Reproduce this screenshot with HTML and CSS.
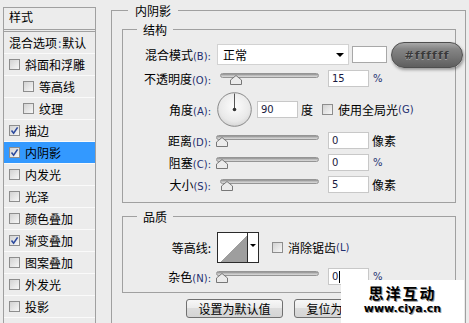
FILE: index.html
```html
<!DOCTYPE html>
<html lang="zh-CN">
<head>
<meta charset="utf-8">
<title>图层样式 - 内阴影</title>
<link rel="stylesheet" href="styles.css">
</head>
<body>
<div class="app">
  <aside class="styles-panel">
    <div class="panel-title">样式</div>
    <ul class="style-list">
      <li class="item blend-opt">混合选项<span class="colon">:</span>默认</li>
      <li class="item"><span class="cb"></span>斜面和浮雕</li>
      <li class="item sub"><span class="cb"></span>等高线</li>
      <li class="item sub"><span class="cb"></span>纹理</li>
      <li class="item"><span class="cb"><svg viewBox="0 0 9 9"><path d="M1.5 4.6 L3.6 7.2 L7.6 1.4" /></svg></span>描边</li>
      <li class="item selected"><span class="cb"><svg viewBox="0 0 9 9"><path d="M1.5 4.6 L3.6 7.2 L7.6 1.4" /></svg></span>内阴影</li>
      <li class="item"><span class="cb"></span>内发光</li>
      <li class="item"><span class="cb"></span>光泽</li>
      <li class="item"><span class="cb"></span>颜色叠加</li>
      <li class="item"><span class="cb"><svg viewBox="0 0 9 9"><path d="M1.5 4.6 L3.6 7.2 L7.6 1.4" /></svg></span>渐变叠加</li>
      <li class="item"><span class="cb"></span>图案叠加</li>
      <li class="item"><span class="cb"></span>外发光</li>
      <li class="item"><span class="cb"></span>投影</li>
      <li class="item"></li>
    </ul>
  </aside>

  <main class="settings">
    <section class="group outer">
      <h2 class="legend">内阴影</h2>

      <section class="group inner struct">
        <h3 class="legend">结构</h3>
        <div class="row r-blend">
          <span class="lbl">混合模式<span class="key">(B):</span></span>
          <div class="select"><span class="select-text">正常</span><span class="caret"></span></div>
          <span class="swatch"></span>
        </div>
        <div class="row r-std">
          <span class="lbl">不透明度<span class="key">(O):</span></span>
          <div class="slider"><span class="track"></span><svg class="thumb" style="left:10px" viewBox="0 0 12 10"><path d="M6 0.5 L11.5 5 V9.5 H0.5 V5 Z"/></svg></div>
          <span class="num">15</span>
          <span class="unit pct">%</span>
        </div>
        <div class="row r-angle">
          <span class="lbl">角度<span class="key">(A):</span></span>
          <svg class="dial" viewBox="0 0 35 35">
            <defs><radialGradient id="dg" cx="50%" cy="40%" r="60%"><stop offset="0" stop-color="#fdfdfd"/><stop offset="0.75" stop-color="#e9e9e9"/><stop offset="1" stop-color="#d6d6d6"/></radialGradient></defs>
            <circle cx="17.5" cy="17.5" r="16.8" fill="url(#dg)" stroke="#8a8a8a" stroke-width="1"/>
            <line x1="17.5" y1="17.5" x2="17.5" y2="1.5" stroke="#555" stroke-width="1"/>
            <circle cx="17.5" cy="17.5" r="1.8" fill="#333"/>
          </svg>
          <span class="num">90</span>
          <span class="deg">度</span>
          <span class="check-line global"><span class="cb"></span>使用全局光<span class="key">(G)</span></span>
        </div>
        <div class="row r-std">
          <span class="lbl">距离<span class="key">(D):</span></span>
          <div class="slider wide"><span class="track"></span><svg class="thumb" style="left:0px" viewBox="0 0 12 10"><path d="M6 0.5 L11.5 5 V9.5 H0.5 V5 Z"/></svg></div>
          <span class="num">0</span>
          <span class="unit">像素</span>
        </div>
        <div class="row r-std">
          <span class="lbl">阻塞<span class="key">(C):</span></span>
          <div class="slider wide"><span class="track"></span><svg class="thumb" style="left:0px" viewBox="0 0 12 10"><path d="M6 0.5 L11.5 5 V9.5 H0.5 V5 Z"/></svg></div>
          <span class="num">0</span>
          <span class="unit pct">%</span>
        </div>
        <div class="row r-std">
          <span class="lbl">大小<span class="key">(S):</span></span>
          <div class="slider"><span class="track"></span><svg class="thumb" style="left:1px" viewBox="0 0 12 10"><path d="M6 0.5 L11.5 5 V9.5 H0.5 V5 Z"/></svg></div>
          <span class="num">5</span>
          <span class="unit">像素</span>
        </div>
      </section>

      <section class="group inner quality">
        <h3 class="legend">品质</h3>
        <div class="row r-contour">
          <span class="lbl">等高线:</span>
          <div class="contour"><span class="contour-preview"></span><span class="contour-arrow"><span class="caret small"></span></span></div>
          <span class="check-line antialias"><span class="cb"></span>消除锯齿<span class="key">(L)</span></span>
        </div>
        <div class="row r-std r-noise">
          <span class="lbl">杂色<span class="key">(N):</span></span>
          <div class="slider wide"><span class="track"></span><svg class="thumb" style="left:0px" viewBox="0 0 12 10"><path d="M6 0.5 L11.5 5 V9.5 H0.5 V5 Z"/></svg></div>
          <span class="num">0<span class="cursor"></span></span>
          <span class="unit pct">%</span>
        </div>
      </section>

      <div class="buttons">
        <button class="btn" type="button">设置为默认值</button>
        <button class="btn" type="button">复位为默认值</button>
      </div>
    </section>
  </main>

  <div class="badge">#ffffff</div>

  <div class="watermark">
    <div class="wm-title">思洋互动</div>
    <div class="wm-url">www.ciya.cn</div>
  </div>
</div>
</body>
</html>
```

FILE: styles.css
```css
* { box-sizing: border-box; }
html, body { margin: 0; padding: 0; }
body {
  background: #ececec;
  font-family: "Noto Sans CJK SC", "Noto Sans", sans-serif;
  font-size: 12px;
  color: #000;
}

.app {
  position: relative;
  width: 469px;
  height: 323px;
  overflow: hidden;
  display: flex;
  align-items: flex-start;
}

/* ---------- left style list ---------- */
.styles-panel {
  flex: none;
  margin: 7px 0 0 3px;
  width: 93px;
  height: 330px;
  border: 1px solid #a0a0a0;
}
.panel-title {
  height: 22px;
  border-bottom: 1px solid #a0a0a0;
  margin-bottom: 1px;
  padding-left: 5px;
  line-height: 17px;
}
.style-list {
  list-style: none;
  margin: 0;
  padding: 0;
  border-top: 1px solid #a0a0a0;
}
.item {
  height: 22px;
  border-bottom: 1px solid #fafafa;
  display: flex;
  align-items: center;
  padding-left: 5px;
  line-height: 21px;
  white-space: nowrap;
}
.item.sub { padding-left: 19px; }
.item.selected { background: #3399ff; }
.blend-opt .colon { color: #2a5db0; margin: 0 1px; }

.cb {
  flex: none;
  width: 11px;
  height: 11px;
  border: 1px solid #8d8d8d;
  background: linear-gradient(135deg, #d2d2d2, #f7f7f7);
  margin-right: 5px;
  display: inline-flex;
  align-items: center;
  justify-content: center;
}
.cb svg { width: 9px; height: 9px; }
.cb svg path { fill: none; stroke: #2d4a9e; stroke-width: 1.6; }

/* ---------- right settings ---------- */
.settings {
  flex: none;
  margin: 10px 0 0 15px;
  width: 355px;
}
.group { border: 1px solid #a0a0a0; }
.outer { height: 330px; }
.legend {
  width: fit-content;
  margin: -9px 0 0 16px;
  padding: 0 7px;
  background: #ececec;
  line-height: 17px;
  font-size: 12px;
  font-weight: normal;
}
.inner { margin: 10px 9px 0 10px; }
.inner .legend { margin-left: 14px; padding: 0 6px; }
.struct { padding-bottom: 9px; }
.quality { margin-top: 13px; padding-bottom: 7px; }

.row { display: flex; align-items: center; white-space: nowrap; }
.lbl { flex: none; width: 88px; text-align: right; }
.key {
  font-family: "DejaVu Sans", sans-serif;
  font-size: 10px;
  color: #1f2f70;
}

.r-blend { height: 21px; margin-top: 6px; }
.select {
  flex: none;
  margin-left: 6px;
  width: 132px;
  height: 21px;
  background: #fff;
  border: 1px solid #d2d2d2;
  display: flex;
  align-items: center;
  padding-left: 5px;
}
.select-text { flex: 1; }
.caret {
  width: 0;
  height: 0;
  border-left: 4px solid transparent;
  border-right: 4px solid transparent;
  border-top: 4px solid #000;
  margin-right: 4px;
}
.caret.small {
  border-left-width: 3px;
  border-right-width: 3px;
  border-top-width: 3px;
  margin: 0;
}
.swatch {
  flex: none;
  margin-left: 3px;
  width: 35px;
  height: 17px;
  background: #fff;
  border: 1px solid #a8a8a8;
}

.r-std { height: 17px; margin-top: 5px; }
.slider {
  position: relative;
  flex: none;
  width: 99px;
  height: 17px;
  margin-left: 9px;
}
.slider.wide { width: 103px; margin-left: 5px; }
.track {
  display: block;
  margin-top: 3px;
  height: 5px;
  border-radius: 3px;
  border: 1px solid #959595;
  background: linear-gradient(#8e8e8e, #c6c6c6 60%, #dadada);
}
.thumb {
  position: absolute;
  top: 5px;
  width: 12px;
  height: 10px;
}
.thumb path { fill: #ebebeb; stroke: #777; stroke-width: 1; }

.num {
  flex: none;
  margin-left: 9px;
  width: 41px;
  height: 17px;
  background: #fff;
  border: 1px solid #c8c8c8;
  font-family: "DejaVu Sans", sans-serif;
  font-size: 10px;
  line-height: 15px;
  padding-left: 3px;
  color: #1a1a40;
  display: flex;
  align-items: center;
}
.cursor {
  display: inline-block;
  width: 1px;
  height: 12px;
  background: #000;
  margin-left: 1px;
}
.unit { margin-left: 3px; }
.unit.pct {
  margin-left: 4px;
  font-family: "DejaVu Sans", sans-serif;
  font-size: 10px;
  color: #1f2f70;
}

.r-angle { height: 35px; margin-top: 5px; }
.dial { flex: none; margin-left: 6px; width: 35px; height: 35px; }
.r-angle .num { margin-left: 5px; }
.deg { margin-left: 3px; }
.check-line { display: flex; align-items: center; }
.global { margin-left: 9px; }

.r-contour { height: 31px; margin-top: 7px; }
.contour {
  flex: none;
  margin-left: 6px;
  width: 42px;
  height: 31px;
  border: 1px solid #2a2a2a;
  background: #fff;
  display: flex;
}
.contour-preview {
  flex: none;
  width: 27px;
  margin: 2px 0 0 2px;
  background: linear-gradient(to bottom right, #fff 50%, #9e9e9e 50%);
}
.contour-arrow {
  flex: 1;
  border-left: 1px solid #2a2a2a;
  display: flex;
  justify-content: center;
  padding-top: 11px;
}
.antialias { margin-left: 13px; }

.buttons {
  display: flex;
  justify-content: center;
  gap: 11px;
  margin-top: 6px;
}
.btn {
  width: 97px;
  height: 19px;
  padding: 0;
  border: 1px solid #707070;
  border-radius: 3px;
  background: linear-gradient(#f7f7f7, #ebebeb 50%, #dcdcdc 50%, #d4d4d4);
  font-family: inherit;
  font-size: 12px;
  line-height: 17px;
  color: #000;
}

/* ---------- overlays ---------- */
.badge {
  position: absolute;
  left: 391px;
  top: 42px;
  width: 72px;
  height: 26px;
  border-radius: 13px;
  border: 1px solid #4e4e4e;
  background: linear-gradient(#a8a8a8, #858585 25%, #747474 60%, #5e5e5e);
  box-shadow: 1px 2px 3px rgba(0, 0, 0, 0.35);
  display: flex;
  align-items: center;
  justify-content: center;
  font-family: "DejaVu Sans", sans-serif;
  font-weight: bold;
  font-size: 11px;
  letter-spacing: 1px;
  color: #3a3a3a;
  text-shadow: 0 1px 0 rgba(255, 255, 255, 0.35);
}

.watermark {
  position: absolute;
  left: 341px;
  top: 280px;
  width: 123px;
  height: 43px;
  background: #fff;
  text-align: center;
}
.wm-title {
  margin-top: 5px;
  font-size: 15px;
  font-weight: bold;
  line-height: 15px;
  letter-spacing: 2px;
  text-shadow: 1px 1px 0 #9a9a9a;
}
.wm-url {
  margin-top: 3px;
  font-family: "DejaVu Sans", sans-serif;
  font-weight: bold;
  font-size: 11px;
  line-height: 11px;
  text-shadow: 1px 1px 0 #9a9a9a;
}
```
